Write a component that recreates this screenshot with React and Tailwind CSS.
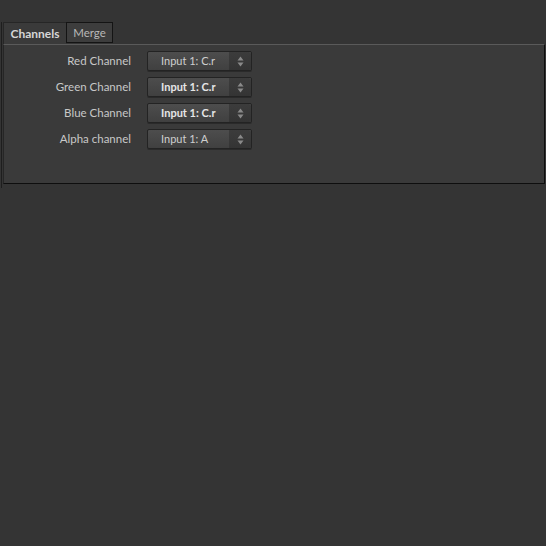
import React from "react";

const rows = [
  { label: "Red Channel", value: "Input 1: C.r", bold: false },
  { label: "Green Channel", value: "Input 1: C.r", bold: true },
  { label: "Blue Channel", value: "Input 1: C.r", bold: true },
  { label: "Alpha channel", value: "Input 1: A", bold: false },
];

function Arrows() {
  return (
    <svg width="7" height="11" viewBox="0 0 7 11">
      <path d="M3.5 0.5 L6.5 4.5 L0.5 4.5 Z" fill="#8a8a8a" />
      <path d="M3.5 10.5 L6.5 6.5 L0.5 6.5 Z" fill="#8a8a8a" />
    </svg>
  );
}

export default function App() {
  return (
    <div
      className="w-[546px] h-[546px] bg-[#343434] pt-[22px] text-[12px]"
      style={{ fontFamily: 'Lato, "Noto Sans", sans-serif' }}
    >
      <div className="ml-[1px] border-l border-[#1e1e1e] pb-[4px] pl-[1px]">
        <div className="flex h-[22px] items-stretch">
          <div className="w-[63px] bg-[#3a3a3a] border-l border-t border-[#262626] flex items-center justify-center font-bold text-[#d6d6d6] text-[12px]">
            Channels
          </div>
          <div className="w-[47px] h-[21px] bg-[#3d3d3d] border border-[#141414] flex items-center justify-center text-[#b8b8b8] text-[11.5px]">
            Merge
          </div>
        </div>
        <div className="h-[140px] bg-[#3a3a3a] border-t border-t-[#5a5a5a] border-r border-r-[#0e0e0e] border-b border-b-[#0e0e0e] border-l border-l-[#262626] mr-[1px] pt-[6px] flex flex-col gap-[6px]">
          {rows.map((r) => (
            <div key={r.label} className="flex items-center h-[20px]">
              <div className="w-[127px] text-right text-[#c8c8c8] text-[11.5px]">{r.label}</div>
              <div className="ml-[16px] w-[105px] h-[20px] flex rounded-[2px] border border-[#232323] bg-gradient-to-b from-[#4d4d4d] to-[#404040] shadow-[0_1px_0_#2a2a2a]">
                <div
                  className={`flex-1 pl-[13px] flex items-center text-[11px] ${
                    r.bold ? "font-bold text-[#e6e6e6]" : "text-[#cfcfcf]"
                  }`}
                >
                  {r.value}
                </div>
                <div className="w-[22px] bg-gradient-to-b from-[#3c3c3c] to-[#343434] flex items-center justify-center rounded-r-[2px]">
                  <Arrows />
                </div>
              </div>
            </div>
          ))}
        </div>
      </div>
    </div>
  );
}
